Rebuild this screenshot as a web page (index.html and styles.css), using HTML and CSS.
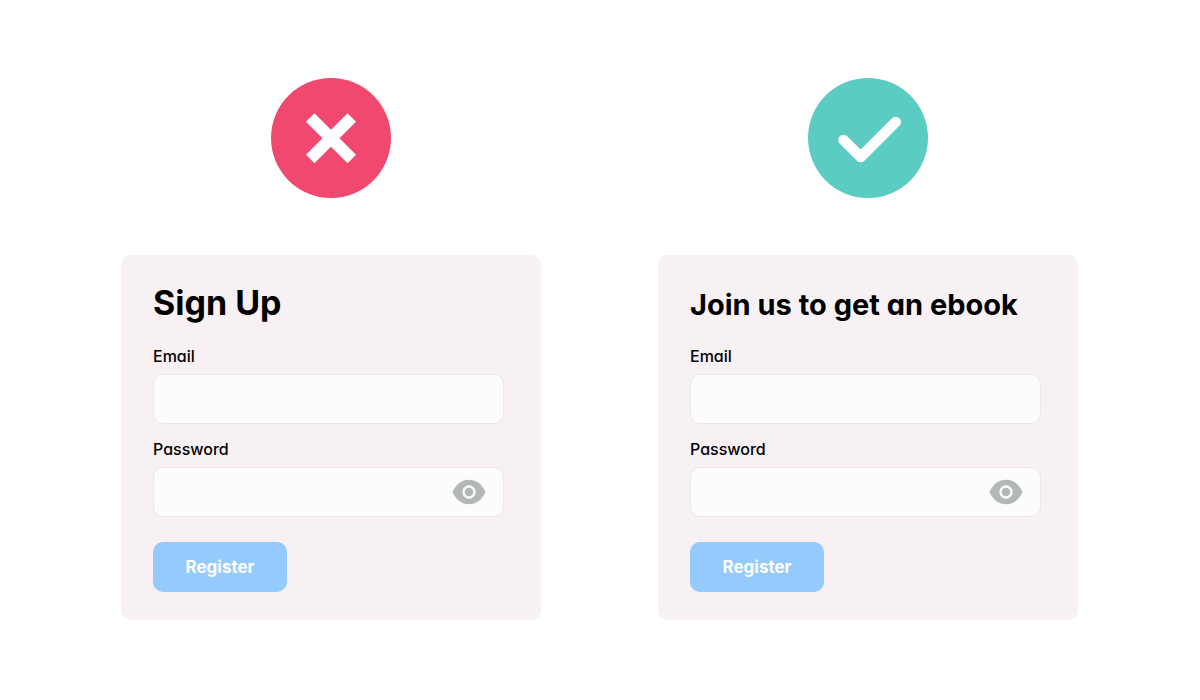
FILE: index.html
```html
<!DOCTYPE html>
<html lang="en">
<head>
<meta charset="utf-8">
<meta name="viewport" content="width=device-width, initial-scale=1">
<title>Sign up form comparison</title>
<link rel="stylesheet" href="styles.css">
</head>
<body>
<main class="comparison">
  <section class="example">
    <svg class="badge" viewBox="0 0 120 120" role="img" aria-label="Avoid">
      <circle cx="60" cy="60" r="60" fill="#f0486f"/>
      <path d="M39.2 39.4 80.8 81M80.8 39.4 39.2 81" stroke="#fff" stroke-width="12"/>
    </svg>
    <form class="card">
      <h2 class="title title-large">Sign Up</h2>
      <label class="label" for="email-a">Email</label>
      <input class="input" id="email-a" type="email">
      <label class="label" for="password-a">Password</label>
      <div class="password">
        <input class="input" id="password-a" type="password">
        <button class="reveal" type="button" aria-label="Show password">
          <svg class="eye" viewBox="0 0 34 26">
            <path d="M.5 13C4 5 10 .8 17 .8S30 5 33.5 13C30 21 24 25.2 17 25.2S4 21 .5 13Z" fill="#b2b7b7"/>
            <circle cx="17" cy="13" r="5.5" fill="none" stroke="#fcfcfc" stroke-width="2.4"/>
          </svg>
        </button>
      </div>
      <button class="submit" type="button">Register</button>
    </form>
  </section>
  <section class="example">
    <svg class="badge" viewBox="0 0 120 120" role="img" aria-label="Recommended">
      <circle cx="60" cy="60" r="60" fill="#5bccc2"/>
      <path d="M35.5 62 52.7 79 87.7 44" fill="none" stroke="#fff" stroke-width="10.6" stroke-linecap="round" stroke-linejoin="round"/>
    </svg>
    <form class="card">
      <h2 class="title">Join us to get an ebook</h2>
      <label class="label" for="email-b">Email</label>
      <input class="input" id="email-b" type="email">
      <label class="label" for="password-b">Password</label>
      <div class="password">
        <input class="input" id="password-b" type="password">
        <button class="reveal" type="button" aria-label="Show password">
          <svg class="eye" viewBox="0 0 34 26">
            <path d="M.5 13C4 5 10 .8 17 .8S30 5 33.5 13C30 21 24 25.2 17 25.2S4 21 .5 13Z" fill="#b2b7b7"/>
            <circle cx="17" cy="13" r="5.5" fill="none" stroke="#fcfcfc" stroke-width="2.4"/>
          </svg>
        </button>
      </div>
      <button class="submit" type="button">Register</button>
    </form>
  </section>
</main>
</body>
</html>
```
FILE: styles.css
```css
* { box-sizing: border-box; }

body {
  margin: 0;
  background: #fff;
  color: #000;
  font-family: Inter, "Liberation Sans", sans-serif;
  font-feature-settings: "cv11";
}

.comparison {
  display: flex;
  flex-wrap: wrap;
  justify-content: center;
  gap: 60px 117px;
  padding: 78px 17px 78px 16px;
}

.example {
  display: flex;
  flex-direction: column;
  align-items: center;
  gap: 57px;
  flex: 0 1 420px;
}

.badge { width: 120px; height: 120px; }

.card {
  display: flex;
  flex-direction: column;
  width: 100%;
  padding: 28px 37px 28px 32px;
  border-radius: 10px;
  background: #f7f1f4;
}

.title {
  margin: 0 0 20px;
  font-size: 29px;
  font-weight: 700;
  line-height: 43px;
}

.title-large { font-size: 34px; line-height: 40px; margin-bottom: 23px; }

.label {
  font-size: 16px;
  font-weight: 500;
  line-height: 20px;
  margin-bottom: 8px;
}

.input {
  width: 100%;
  height: 50px;
  margin-bottom: 15px;
  padding: 0 16px;
  border: 1px solid #ebe7e9;
  border-radius: 10px;
  background: #fcfcfc;
  font: inherit;
  font-size: 16px;
}

.password { position: relative; margin-bottom: 25px; }
.password .input { display: block; margin: 0; padding-right: 60px; }

.reveal {
  position: absolute;
  top: 12px;
  right: 18px;
  padding: 0;
  border: 0;
  background: none;
}

.eye { display: block; width: 34px; height: 26px; }

.submit {
  align-self: flex-start;
  min-width: 134px;
  height: 50px;
  padding: 0 32px;
  border: 0;
  border-radius: 10px;
  background: #95caff;
  color: #fff;
  font: inherit;
  font-feature-settings: inherit;
  font-size: 17px;
  font-weight: 700;
}
```
